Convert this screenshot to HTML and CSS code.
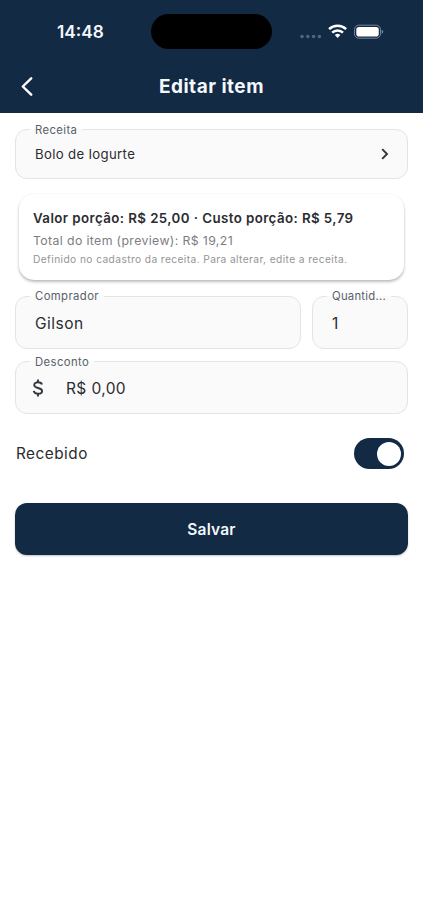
FILE: index.html
```html
<!DOCTYPE html>
<html lang="pt-BR">
<head>
<meta charset="utf-8">
<meta name="viewport" content="width=device-width, initial-scale=1">
<title>Editar item</title>
<link rel="stylesheet" href="styles.css">
</head>
<body>
<header class="header">
  <div class="status">
    <span class="time">14:48</span>
    <span class="island"></span>
    <svg class="indicators" width="84" height="16" viewBox="0 0 84 16">
      <g fill="#53687e"><circle cx="2" cy="13.5" r="1.7"/><circle cx="7.8" cy="13.5" r="1.7"/><circle cx="13.6" cy="13.5" r="1.7"/><circle cx="19.4" cy="13.5" r="1.7"/></g>
      <g fill="none" stroke="#fff" stroke-width="2.5"><path d="M29.1 6.2a12.3 12.3 0 0 1 17 0"/><path d="M32.2 9.7a7.6 7.6 0 0 1 10.8 0"/></g>
      <path d="M37.6 15l-2.8-2.9a4.2 4.2 0 0 1 5.6 0z" fill="#fff"/>
      <rect x="54.5" y="2.2" width="26" height="13" rx="4.3" fill="none" stroke="#74869a"/>
      <rect x="56.3" y="3.9" width="22.5" height="9.6" rx="2.8" fill="#fff"/>
      <path d="M81.7 6.7v4q1.6-.6 1.6-2t-1.6-2z" fill="#74869a"/>
    </svg>
  </div>
  <div class="appbar">
    <svg class="back" width="12" height="20" viewBox="0 0 12 20"><path d="M10.2 1.3L1.8 9.5l8.4 8.2" fill="none" stroke="#fff" stroke-width="2.4" stroke-linecap="round" stroke-linejoin="round"/></svg>
    <h1 class="title">Editar item</h1>
  </div>
</header>
<main class="form">
  <fieldset class="field recipe">
    <legend>Receita</legend>
    <div class="value"><span class="recipe-name">Bolo de Iogurte</span>
      <svg class="chevron" width="8" height="12" viewBox="0 0 8 12"><path d="M1.2 1.2L6 6l-4.8 4.8" fill="none" stroke="#30343a" stroke-width="1.9"/></svg>
    </div>
  </fieldset>
  <section class="card">
    <p class="prices">Valor porção: R$ 25,00 · Custo porção: R$ 5,79</p>
    <p class="total">Total do item (preview): R$ 19,21</p>
    <p class="note">Definido no cadastro da receita. Para alterar, edite a receita.</p>
  </section>
  <div class="row">
    <fieldset class="field">
      <legend>Comprador</legend>
      <div class="value"><span class="buyer">Gilson</span></div>
    </fieldset>
    <fieldset class="field">
      <legend class="qty">Quantid...</legend>
      <div class="value">1</div>
    </fieldset>
  </div>
  <fieldset class="field discount">
    <legend>Desconto</legend>
    <div class="value">
      <svg class="dollar" width="12" height="18" viewBox="0 0 12 18"><path d="M10 5.6C9.600 4 8.300 3.200 6 3.200 3.700 3.200 2.200 4.200 2.200 6c0 4 7.900 1.900 7.900 6 0 1.800-1.600 2.800-4.100 2.800-2.500 0-3.900-1-4.300-2.900M6 .5v2.700M6 14.800v2.700" fill="none" stroke="#30383f" stroke-width="1.900"/></svg>
      <span class="amount">R$ 0,00</span>
    </div>
  </fieldset>
  <div class="received">
    <span>Recebido</span>
    <span class="switch"><span class="knob"></span></span>
  </div>
  <button class="save">Salvar</button>
</main>
</body>
</html>
```
FILE: styles.css
```css
* { box-sizing: border-box; margin: 0; }
body {
  min-height: 920px;
  background: #fff;
  color: #2b2c30;
  font-family: Inter, "Liberation Sans", sans-serif;
}
.header { height: 113px; background: #122a43; color: #f4f8fc; }
.status {
  display: grid;
  grid-template-columns: 151px 121px 1fr;
  align-items: center;
  height: 62px;
}
.time { padding: 1px 0 0 57px; font-size: 17.3px; font-weight: 600; line-height: 20px; }
.island { height: 35px; border-radius: 18px; background: #000; }
.indicators { display: block; margin-left: 28px; margin-top: -1px; }
.appbar { position: relative; display: flex; align-items: center; justify-content: center; height: 49px; }
.back { position: absolute; left: 21px; top: 15px; }
.title { padding-top: 1px; font-size: 19px; font-weight: 650; line-height: 24px; letter-spacing: .5px; }
.form { padding: 9px 15px 0; }
.field {
  min-width: 0;
  height: 57px;
  padding: 0 0 0 14px;
  border: 1px solid #e4e4e5;
  border-radius: 12px;
  background: #fafafa;
}
.field legend {
  height: 15px;
  padding: 1px 5px 0;
  color: #59616a;
  font-size: 11.3px;
  line-height: 15px;
  letter-spacing: .4px;
  white-space: nowrap;
}
.row legend, .discount legend { padding-top: 0; }
.discount legend { padding-top: 1px; }
.field .qty { letter-spacing: .25px; }
.value {
  display: flex;
  align-items: center;
  height: 36px;
  padding-left: 5px;
  font-size: 15.5px;
  line-height: 20px;
  letter-spacing: .5px;
}
.recipe .value { height: 34px; justify-content: space-between; padding-right: 18px; font-size: 13.2px; letter-spacing: .33px; }
.card {
  height: 86px;
  margin: 15px 4px 9px;
  padding: 14px 14px 0;
  border-radius: 15px;
  background: #fff;
  box-shadow: 0 2px 3px rgba(0, 0, 0, .26), 0 0 2px rgba(0, 0, 0, .06);
  white-space: nowrap;
}
.prices { font-size: 13.3px; font-weight: 600; line-height: 20px; letter-spacing: .42px; }
.total { margin-top: 2px; color: #7d7d7f; font-size: 12.3px; line-height: 21px; letter-spacing: .37px; }
.note { color: #949496; font-size: 10.2px; line-height: 16px; letter-spacing: .41px; }
.row { display: grid; grid-template-columns: 286px 96px; gap: 11px; }
.row .field, .discount { height: 60px; }
.row .value, .discount .value { height: 40px; }
.discount { margin-top: 5px; }
.discount .value { padding-left: 2px; gap: 22px; letter-spacing: .38px; }
.dollar { margin-top: -2px; }
.received {
  display: flex;
  align-items: center;
  justify-content: space-between;
  height: 31px;
  margin: 24px 4px 34px 1px;
  font-size: 15.3px;
  letter-spacing: .5px;
}
.switch { display: flex; align-items: center; justify-content: flex-end; width: 50px; height: 31px; padding-right: 3px; border-radius: 16px; background: #122a43; }
.knob { width: 24px; height: 24px; border-radius: 50%; background: #fff; }
.save {
  display: block;
  width: 100%;
  height: 52px;
  padding-top: 2px;
  border: 0;
  border-radius: 12px;
  background: #122a43;
  color: #f4f8fc;
  font: 600 15.5px/20px Inter, "Liberation Sans", sans-serif;
  letter-spacing: .2px;
  box-shadow: 0 1px 2px rgba(0, 0, 0, .25);
}
```
